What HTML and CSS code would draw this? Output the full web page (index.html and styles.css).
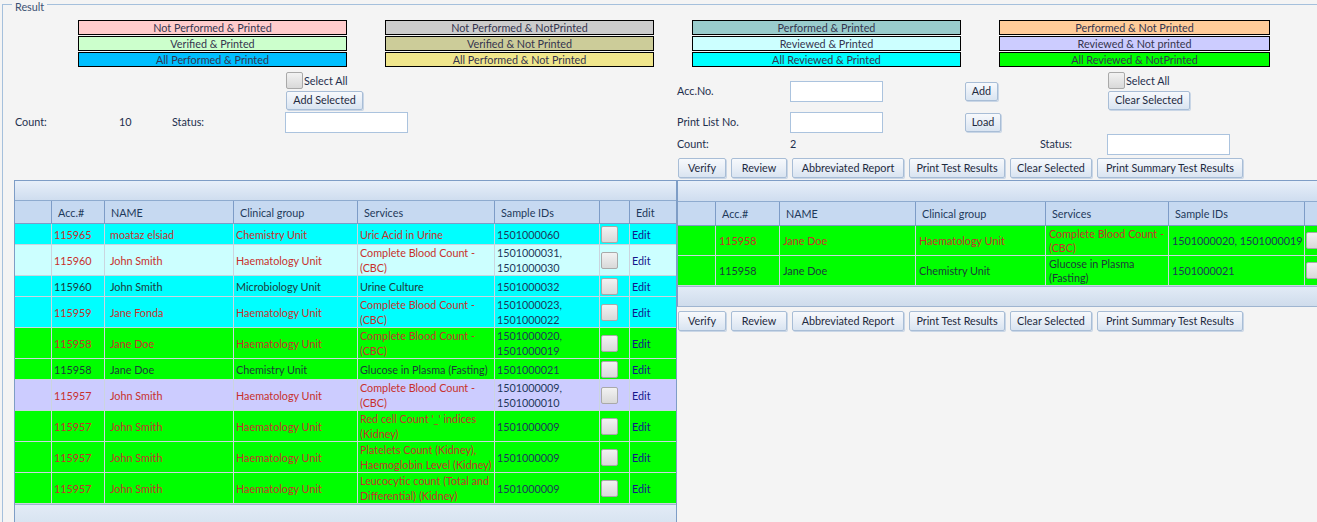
FILE: index.html
```html
<!DOCTYPE html>
<html lang="en">
<head>
<meta charset="utf-8">
<title>Result</title>
<link rel="stylesheet" href="styles.css">
</head>
<body>
<fieldset class="result">
  <legend>Result</legend>

  <div class="legend-grid">
    <div class="lg lg-npp">Not Performed &amp; Printed</div>
    <div class="lg lg-vp">Verified &amp; Printed</div>
    <div class="lg lg-app">All Performed &amp; Printed</div>
    <div class="lg lg-npnp">Not Performed &amp; NotPrinted</div>
    <div class="lg lg-vnp">Verified &amp; Not Printed</div>
    <div class="lg lg-apnp">All Performed &amp; Not Printed</div>
    <div class="lg lg-pp">Performed &amp; Printed</div>
    <div class="lg lg-rp">Reviewed &amp; Printed</div>
    <div class="lg lg-arp">All Reviewed &amp; Printed</div>
    <div class="lg lg-pnp">Performed &amp; Not Printed</div>
    <div class="lg lg-rnp">Reviewed &amp; Not printed</div>
    <div class="lg lg-arnp">All Reviewed &amp; NotPrinted</div>
  </div>

  <div class="controls">
    <label class="chk-label l-selall"><span class="cb"></span>Select All</label>
    <div class="l-add"><button class="btn bw-77">Add Selected</button></div>
    <span class="lbl l-count">Count:</span>
    <span class="lbl l-countv">10</span>
    <span class="lbl l-status">Status:</span>
    <div class="l-statusin"><input class="txt txt-wide" type="text"></div>

    <span class="lbl r-acc">Acc.No.</span>
    <div class="r-accin"><input class="txt txt-narrow" type="text"></div>
    <div class="r-add"><button class="btn bw-33">Add</button></div>
    <label class="chk-label r-selall"><span class="cb"></span>Select All</label>
    <div class="r-clear"><button class="btn bw-82">Clear Selected</button></div>
    <span class="lbl r-pl">Print List No.</span>
    <div class="r-plin"><input class="txt txt-narrow" type="text"></div>
    <div class="r-load"><button class="btn bw-36">Load</button></div>
    <span class="lbl r-count">Count:</span>
    <span class="lbl r-countv">2</span>
    <span class="lbl r-status">Status:</span>
    <div class="r-statusin"><input class="txt txt-wide" type="text"></div>

    <div class="actions r-actions">
      <button class="btn bw-48">Verify</button>
      <button class="btn bw-56">Review</button>
      <button class="btn bw-112">Abbreviated Report</button>
      <button class="btn bw-96">Print Test Results</button>
      <button class="btn bw-82">Clear Selected</button>
      <button class="btn bw-146">Print Summary Test Results</button>
    </div>
  </div>

  <div class="panes">
    <div class="pane pane-left">
      <div class="cap"></div>
      <table class="grid grid-left">
        <colgroup>
          <col class="w-37"><col class="w-53"><col class="w-129"><col class="w-124"><col class="w-137"><col class="w-105"><col class="w-30"><col class="w-46">
        </colgroup>
        <thead>
          <tr><th></th><th>Acc.#</th><th>NAME</th><th>Clinical group</th><th>Services</th><th>Sample IDs</th><th></th><th class="last">Edit</th></tr>
        </thead>
        <tbody>
          <tr class="bg-cyan t-red"><td></td><td>115965</td><td class="nm">moataz elsiad</td><td>Chemistry Unit</td><td>Uric Acid in Urine</td><td class="sid">1501000060</td><td class="chk"><span class="cb"></span></td><td class="edit last">Edit</td></tr>
          <tr class="bg-lcyan t-red"><td></td><td>115960</td><td class="nm">John Smith</td><td>Haematology Unit</td><td>Complete Blood Count - (CBC)</td><td class="sid">1501000031, 1501000030</td><td class="chk"><span class="cb"></span></td><td class="edit last">Edit</td></tr>
          <tr class="bg-cyan t-dark"><td></td><td>115960</td><td class="nm">John Smith</td><td>Microbiology Unit</td><td>Urine Culture</td><td class="sid">1501000032</td><td class="chk"><span class="cb"></span></td><td class="edit last">Edit</td></tr>
          <tr class="bg-cyan t-red"><td></td><td>115959</td><td class="nm">Jane Fonda</td><td>Haematology Unit</td><td>Complete Blood Count - (CBC)</td><td class="sid">1501000023, 1501000022</td><td class="chk"><span class="cb"></span></td><td class="edit last">Edit</td></tr>
          <tr class="bg-green t-red"><td></td><td>115958</td><td class="nm">Jane Doe</td><td>Haematology Unit</td><td>Complete Blood Count - (CBC)</td><td class="sid">1501000020, 1501000019</td><td class="chk"><span class="cb"></span></td><td class="edit last">Edit</td></tr>
          <tr class="bg-green t-dark"><td></td><td>115958</td><td class="nm">Jane Doe</td><td>Chemistry Unit</td><td>Glucose in Plasma (Fasting)</td><td class="sid">1501000021</td><td class="chk"><span class="cb"></span></td><td class="edit last">Edit</td></tr>
          <tr class="bg-lav t-red"><td></td><td>115957</td><td class="nm">John Smith</td><td>Haematology Unit</td><td>Complete Blood Count - (CBC)</td><td class="sid">1501000009, 1501000010</td><td class="chk"><span class="cb"></span></td><td class="edit last">Edit</td></tr>
          <tr class="bg-green t-red"><td></td><td>115957</td><td class="nm">John Smith</td><td>Haematology Unit</td><td>Red cell Count '_' indices (Kidney)</td><td class="sid">1501000009</td><td class="chk"><span class="cb"></span></td><td class="edit last">Edit</td></tr>
          <tr class="bg-green t-red"><td></td><td>115957</td><td class="nm">John Smith</td><td>Haematology Unit</td><td>Platelets Count (Kidney), Haemoglobin Level (Kidney)</td><td class="sid">1501000009</td><td class="chk"><span class="cb"></span></td><td class="edit last">Edit</td></tr>
          <tr class="bg-green t-red"><td></td><td>115957</td><td class="nm">John Smith</td><td>Haematology Unit</td><td>Leucocytic count (Total and Differential) (Kidney)</td><td class="sid">1501000009</td><td class="chk"><span class="cb"></span></td><td class="edit last">Edit</td></tr>
        </tbody>
      </table>
      <div class="foot foot-fill"></div>
    </div>

    <div class="pane pane-right">
      <div class="rgrid">
        <div class="cap cap-r"></div>
        <table class="grid grid-right">
          <colgroup>
            <col class="w-38"><col class="w-64"><col class="w-136"><col class="w-130"><col class="w-123"><col class="w-136"><col class="w-30"><col class="w-46">
          </colgroup>
          <thead>
            <tr><th></th><th>Acc.#</th><th>NAME</th><th>Clinical group</th><th>Services</th><th>Sample IDs</th><th></th><th class="last">Edit</th></tr>
          </thead>
          <tbody>
            <tr class="bg-green t-red"><td></td><td>115958</td><td>Jane Doe</td><td>Haematology Unit</td><td>Complete Blood Count - (CBC)</td><td class="sid nowrap">1501000020, 1501000019</td><td class="chk"><span class="cb"></span></td><td class="edit last">Edit</td></tr>
            <tr class="bg-green t-dark"><td></td><td>115958</td><td>Jane Doe</td><td>Chemistry Unit</td><td>Glucose in Plasma (Fasting)</td><td class="sid nowrap">1501000021</td><td class="chk"><span class="cb"></span></td><td class="edit last">Edit</td></tr>
          </tbody>
        </table>
        <div class="foot foot-r"></div>
      </div>
      <div class="actions actions-bottom">
        <button class="btn bw-48">Verify</button>
        <button class="btn bw-56">Review</button>
        <button class="btn bw-112">Abbreviated Report</button>
        <button class="btn bw-96">Print Test Results</button>
        <button class="btn bw-82">Clear Selected</button>
        <button class="btn bw-146">Print Summary Test Results</button>
      </div>
    </div>
  </div>
</fieldset>
</body>
</html>
```

FILE: styles.css
```css
* { box-sizing: border-box; }

html, body {
  margin: 0;
  height: 100%;
}

body {
  background: #f4f4f4;
  font-family: "Lato", "Noto Sans", sans-serif;
  font-size: 10.8px;
  color: #1e395b;
  overflow: hidden;
}

.result {
  margin: -4px -60px 0 2px;
  min-width: 0;
  border: 1px solid #a5c0dc;
  padding: 7px 0 0 11px;
  height: 560px;
}

.result legend {
  margin-left: -2px;
  padding: 5px 3px 0;
  line-height: 12px;
  font-size: 10.8px;
  color: #3d5273;
}

/* colour legend */
.legend-grid {
  display: grid;
  grid-template-columns: 269px 269px 269px 271px;
  grid-template-rows: repeat(3, 15px);
  grid-auto-flow: column;
  column-gap: 38px;
  row-gap: 1px;
  margin-left: 64px;
}

.lg {
  border: 1px solid #000;
  text-align: center;
  line-height: 13px;
  font-size: 10.8px;
  color: #34344e;
  white-space: nowrap;
}

.lg-npp { background: #ffcccc; }
.lg-vp { background: #ccffcc; }
.lg-app { background: #00bfff; }
.lg-npnp { background: #cccccc; }
.lg-vnp { background: #cccc99; }
.lg-apnp { background: #f0e68c; }
.lg-pp { background: #99cccc; }
.lg-rp { background: #ccffff; }
.lg-arp { background: #00ffff; }
.lg-pnp { background: #ffcc99; }
.lg-rnp { background: #ccccff; }
.lg-arnp { background: #00ff00; }

/* controls */
.controls {
  display: grid;
  grid-template-columns: 105px 53px 113px 392px 113px 175px 75px 67px 1fr;
  grid-template-rows: 18px 22px 22px 22px 25px;
  margin-top: 4px;
  align-items: center;
}

.lbl { white-space: nowrap; color: #1e2f4d; padding-bottom: 2px; }

.chk-label {
  display: flex;
  align-items: center;
  gap: 1px;
  color: #1e2f4d;
  margin-left: 1px;
  align-self: start;
  padding-top: 1px;
}

.cb {
  display: block;
  width: 17px;
  height: 17px;
  border: 1px solid #a9a9a9;
  border-radius: 2px;
  background: linear-gradient(#f2f2f2, #d9d9d9);
}

.btn {
  font: inherit;
  color: #1e2a3e;
  height: 19px;
  padding: 0 0 1px;
  border: 1px solid #a8bdd6;
  border-radius: 2px;
  background: linear-gradient(#f7f9fc 0%, #e9eff7 50%, #d9e4f1 100%);
  box-shadow: 1px 1px 0 #c9d6e6;
  white-space: nowrap;
  line-height: 15px;
  text-align: center;
}

.bw-33 { width: 33px; }
.bw-36 { width: 36px; }
.bw-48 { width: 48px; }
.bw-56 { width: 56px; }
.bw-77 { width: 77px; }
.bw-82 { width: 82px; }
.bw-96 { width: 96px; }
.bw-112 { width: 112px; }
.bw-146 { width: 146px; }

.txt {
  display: block;
  height: 21px;
  border: 1px solid #abc3de;
  background: #fff;
  padding: 0;
}
.txt-wide { width: 123px; }
.txt-narrow { width: 93px; }

.l-selall { grid-column: 4; grid-row: 1; }
.l-add { grid-column: 4; grid-row: 2; padding-left: 1px; }
.l-count { grid-column: 1; grid-row: 3; padding-left: 1px; }
.l-countv { grid-column: 2; grid-row: 3; }
.l-status { grid-column: 3; grid-row: 3; }
.l-statusin { grid-column: 4; grid-row: 3; }

.r-acc { grid-column: 5; grid-row: 1 / 3; }
.r-accin { grid-column: 6; grid-row: 1 / 3; }
.r-add { grid-column: 7; grid-row: 1 / 3; }
.r-selall { grid-column: 9; grid-row: 1; }
.r-clear { grid-column: 9; grid-row: 2; padding-left: 1px; }
.r-pl { grid-column: 5; grid-row: 3; }
.r-plin { grid-column: 6; grid-row: 3; }
.r-load { grid-column: 7; grid-row: 3; }
.r-count { grid-column: 5; grid-row: 4; }
.r-countv { grid-column: 6; grid-row: 4; }
.r-status { grid-column: 8; grid-row: 4; }
.r-statusin { grid-column: 9; grid-row: 4; }

.actions {
  display: flex;
  gap: 5px;
  padding-left: 1px;
}
.actions .btn { height: 20px; }
.r-actions { grid-column: 5 / 10; grid-row: 5; align-self: start; margin-top: 3px; }
.actions-bottom { margin-top: 4px; }

/* grids */
.panes {
  display: flex;
  height: 360px;
}

.pane-left {
  width: 663px;
  flex: none;
  border: 1px solid #7e9dc6;
  border-bottom: none;
  display: flex;
  flex-direction: column;
}

.pane-right {
  flex: 1;
  min-width: 0;
  overflow: hidden;
}

.rgrid {
  border-top: 1px solid #7e9dc6;
  border-left: 1px solid #7e9dc6;
  border-bottom: 1px solid #9fb5d0;
}

.cap {
  height: 20px;
  flex: none;
  background: linear-gradient(#e7eff9, #cfddef);
  border-bottom: 1px solid #8eabcf;
}
.cap-r { height: 21px; }

.grid {
  border-collapse: separate;
  border-spacing: 0;
  table-layout: fixed;
}
.grid-left { width: 661px; }
.grid-right { width: 703px; }

.w-30 { width: 30px; }
.w-37 { width: 37px; }
.w-38 { width: 38px; }
.w-46 { width: 46px; }
.w-53 { width: 53px; }
.w-64 { width: 64px; }
.w-105 { width: 105px; }
.w-123 { width: 123px; }
.w-124 { width: 124px; }
.w-129 { width: 129px; }
.w-130 { width: 130px; }
.w-136 { width: 136px; }
.w-137 { width: 137px; }

.grid th {
  height: 23px;
  background: #c6d9f1;
  border-right: 1px solid #7d9cc7;
  border-bottom: 1px solid #7d9cc7;
  text-align: left;
  font-weight: normal;
  padding: 0 0 0 6px;
  color: #1e395b;
  white-space: nowrap;
  overflow: hidden;
}
.grid-right th { height: 24px; }

.grid td {
  height: 21px;
  border-right: 1px solid #cbd5df;
  border-bottom: 1px solid #cbd5df;
  padding: 0 1px 0 2px;
  line-height: 15px;
  vertical-align: middle;
  overflow: hidden;
}
.grid-right td { height: 30px; line-height: 14px; padding: 0 2px 0 3px; }

.grid .last { border-right: none; }
.grid td.nm { padding-left: 5px; }
.grid td.nowrap { white-space: nowrap; }
.grid-right td:first-child, .grid-left td:first-child { padding: 0; }

.grid td.chk { padding: 0 1px; }
.grid td.sid { color: #1e395b; }
.grid td.edit { color: #16168c; }

.t-red td { color: #c8302c; }
.t-dark td { color: #1e3a3a; }

.bg-cyan td { background: #00ffff; }
.bg-lcyan td { background: #ccffff; }
.bg-green td { background: #00ff00; }
.bg-lav td { background: #ccccff; }

.foot {
  background: linear-gradient(#e2ebf6, #cfdcec);
  border-top: 1px solid #9fb5d0;
}
.foot-fill { flex: 1; }
.foot-r { height: 20px; }
```
